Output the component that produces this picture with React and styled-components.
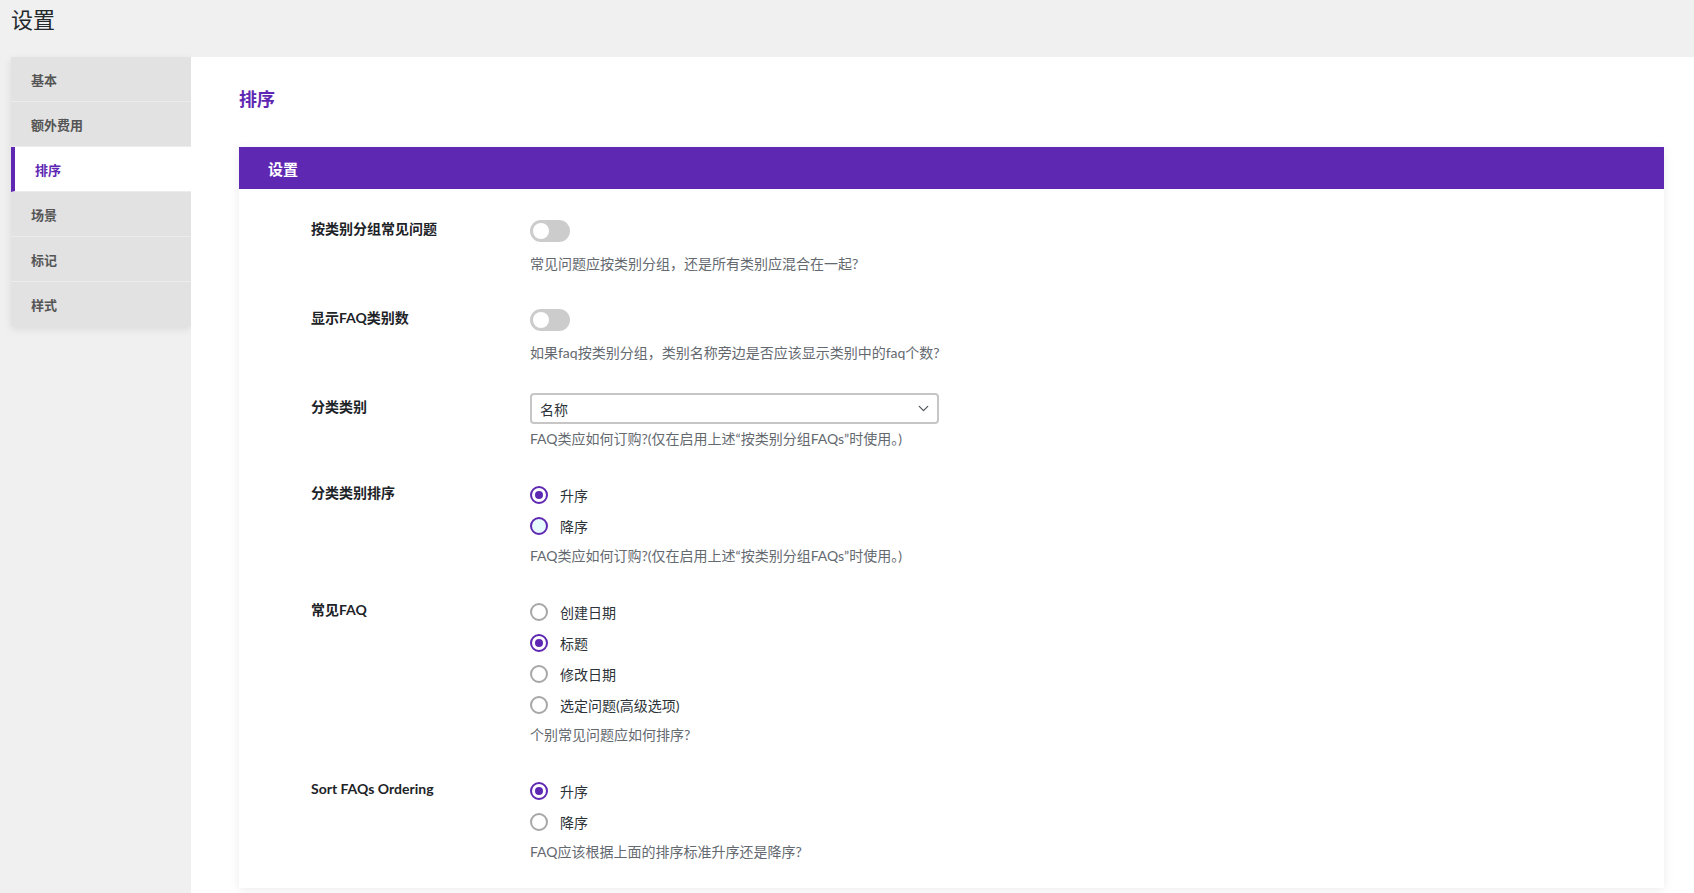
import React from 'react'
import styled, { createGlobalStyle } from 'styled-components'
import { ChevronDown } from 'lucide-react'

const purple = '#5f28b3'
const fontStack = `"Segoe UI", Lato, "Noto Sans CJK SC", "Noto Sans", sans-serif`

const GlobalStyle = createGlobalStyle`
  html, body {
    margin: 0;
    padding: 0;
    background: #f0f0f0;
    font-family: ${fontStack};
  }
  * { box-sizing: border-box; }
`

const Page = styled.div`
  min-height: 100vh;
  display: flex;
  flex-direction: column;
`

const TopBar = styled.header`
  height: 57px;
  padding: 0 0 0 11px;
  display: flex;
  align-items: flex-start;
`

const PageTitle = styled.h1`
  margin: 0;
  font-size: 22px;
  line-height: 40px;
  font-weight: 400;
  color: #23282d;
`

const Body = styled.div`
  flex: 1;
  display: flex;
  align-items: stretch;
`

const SideColumn = styled.aside`
  width: 191px;
  flex-shrink: 0;
  padding-left: 11px;
`

const SideMenu = styled.nav`
  display: flex;
  flex-direction: column;
  background: #ebebeb;
  box-shadow: 0 3px 8px rgba(0, 0, 0, 0.09);
`

const SideItem = styled.a`
  height: 45px;
  display: flex;
  align-items: center;
  padding-left: 20px;
  font-size: 13px;
  font-weight: 700;
  color: ${(p) => (p.$active ? purple : '#555')};
  background: ${(p) => (p.$active ? '#fff' : '#e2e2e2')};
  border-left: ${(p) => (p.$active ? `4px solid ${purple}` : '0')};
  border-bottom: 1px solid #ececec;
  cursor: pointer;
  text-decoration: none;

  &:last-child {
    border-bottom: 0;
    height: 44px;
  }
`

const Main = styled.main`
  flex: 1;
  background: #fff;
  padding: 30px 30px 30px 48px;
`

const SectionTitle = styled.h2`
  margin: 0 0 36px;
  font-size: 18px;
  line-height: 24px;
  font-weight: 700;
  color: ${purple};
`

const Card = styled.section`
  background: #fff;
  box-shadow: 0 2px 10px rgba(0, 0, 0, 0.08);
`

const CardHeader = styled.div`
  height: 42px;
  background: ${purple};
  color: #fff;
  display: flex;
  align-items: center;
  padding-left: 29px;
  font-size: 15px;
  font-weight: 700;
`

const CardBody = styled.div`
  padding: 26px 72px 26px;
  display: flex;
  flex-direction: column;
  gap: 30px;
`

const Row = styled.div`
  display: grid;
  grid-template-columns: 219px 1fr;
  align-items: start;
`

const Label = styled.div`
  padding-top: 4px;
  font-size: 14px;
  line-height: 20px;
  font-weight: 700;
  color: #1d2327;
`

const Field = styled.div`
  display: flex;
  flex-direction: column;
  align-items: flex-start;
`

const ToggleBox = styled.div`
  padding: 5px 0 7px;
`

const Toggle = styled.span`
  display: block;
  position: relative;
  width: 40px;
  height: 22px;
  border-radius: 11px;
  background: ${(p) => (p.$on ? purple : '#cccccc')};

  &::after {
    content: '';
    position: absolute;
    top: 3px;
    left: ${(p) => (p.$on ? '21px' : '3px')};
    width: 16px;
    height: 16px;
    border-radius: 50%;
    background: #fff;
  }
`

const SelectBox = styled.div`
  width: 409px;
  height: 31px;
  border: 2px solid #c6c6c6;
  border-radius: 4px;
  display: flex;
  align-items: center;
  justify-content: space-between;
  padding: 0 5px 0 8px;
  font-size: 14px;
  color: #2c3338;
  background: #fff;
`

const RadioList = styled.div`
  display: flex;
  flex-direction: column;
`

const RadioItem = styled.label`
  height: 31px;
  display: flex;
  align-items: center;
  gap: 12px;
  font-size: 14px;
  color: #2c3338;
  cursor: pointer;
`

const RadioDot = styled.span`
  width: 18px;
  height: 18px;
  border-radius: 50%;
  border: 2px solid ${(p) => (p.$checked || p.$hover ? purple : '#a7a7a7')};
  background: ${(p) => (p.$hover ? '#e6fbfb' : '#fff')};
  display: flex;
  align-items: center;
  justify-content: center;

  &::after {
    content: '';
    width: 8px;
    height: 8px;
    border-radius: 50%;
    background: ${(p) => (p.$checked ? purple : 'transparent')};
  }
`

const Description = styled.p`
  margin: 5px 0 0;
  font-size: 14px;
  line-height: 20px;
  color: #646970;
`

const menu = ['基本', '额外费用', '排序', '场景', '标记', '样式']

function RadioGroup({ options, checked, hover }) {
  return (
    <RadioList>
      {options.map((o, i) => (
        <RadioItem key={o}>
          <RadioDot $checked={i === checked} $hover={i === hover} />
          {o}
        </RadioItem>
      ))}
    </RadioList>
  )
}

export default function App() {
  return (
    <Page>
      <GlobalStyle />
      <TopBar>
        <PageTitle>设置</PageTitle>
      </TopBar>
      <Body>
        <SideColumn>
          <SideMenu>
            {menu.map((m) => (
              <SideItem key={m} $active={m === '排序'}>
                {m}
              </SideItem>
            ))}
          </SideMenu>
        </SideColumn>
        <Main>
          <SectionTitle>排序</SectionTitle>
          <Card>
            <CardHeader>设置</CardHeader>
            <CardBody>
              <Row>
                <Label>按类别分组常见问题</Label>
                <Field>
                  <ToggleBox>
                    <Toggle />
                  </ToggleBox>
                  <Description>常见问题应按类别分组，还是所有类别应混合在一起?</Description>
                </Field>
              </Row>
              <Row>
                <Label>显示FAQ类别数</Label>
                <Field>
                  <ToggleBox>
                    <Toggle />
                  </ToggleBox>
                  <Description>如果faq按类别分组，类别名称旁边是否应该显示类别中的faq个数?</Description>
                </Field>
              </Row>
              <Row>
                <Label>分类类别</Label>
                <Field>
                  <SelectBox>
                    <span>名称</span>
                    <ChevronDown size={17} strokeWidth={1.8} color="#50575e" />
                  </SelectBox>
                  <Description>FAQ类应如何订购?(仅在启用上述“按类别分组FAQs”时使用。)</Description>
                </Field>
              </Row>
              <Row>
                <Label>分类类别排序</Label>
                <Field>
                  <RadioGroup options={['升序', '降序']} checked={0} hover={1} />
                  <Description>FAQ类应如何订购?(仅在启用上述“按类别分组FAQs”时使用。)</Description>
                </Field>
              </Row>
              <Row>
                <Label>常见FAQ</Label>
                <Field>
                  <RadioGroup options={['创建日期', '标题', '修改日期', '选定问题(高级选项)']} checked={1} />
                  <Description>个别常见问题应如何排序?</Description>
                </Field>
              </Row>
              <Row>
                <Label>Sort FAQs Ordering</Label>
                <Field>
                  <RadioGroup options={['升序', '降序']} checked={0} />
                  <Description>FAQ应该根据上面的排序标准升序还是降序?</Description>
                </Field>
              </Row>
            </CardBody>
          </Card>
        </Main>
      </Body>
    </Page>
  )
}
